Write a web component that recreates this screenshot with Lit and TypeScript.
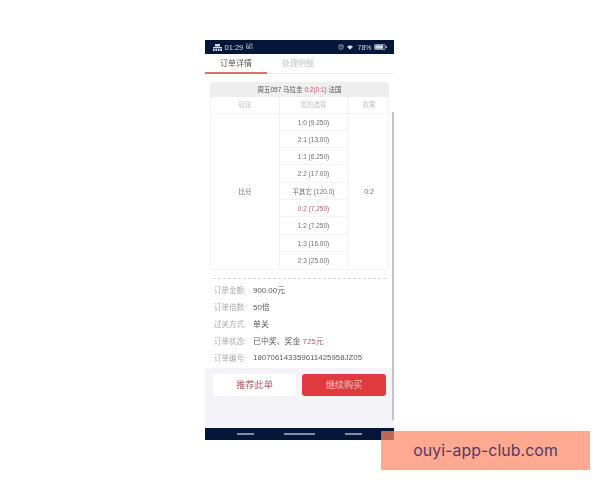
import { LitElement, html, css } from "lit";
import { customElement } from "lit/decorators.js";

const picks = ["1:0 (9.250)", "2:1 (13.00)", "1:1 (6.250)", "2:2 (17.00)", "平其它 (120.0)", "0:2 (7.250)", "1:2 (7.250)", "1:3 (16.00)", "2:3 (25.00)"];

@customElement("app-root")
export class AppRoot extends LitElement {
  static styles = css`
    :host { display: block; width: 600px; height: 480px; position: relative; overflow: hidden; background: #fff;
      font-family: "Liberation Sans", "Noto Sans CJK SC", sans-serif; }
    .stage { padding: 40px 0 0 205px; }
    .phone { width: 189px; height: 400px; display: flex; flex-direction: column; background: #fff; position: relative; filter: blur(0.4px); }
    .status { height: 14px; background: #04173a; color: #d5dbe5; display: flex; align-items: center; padding: 0 7px 0 8px; font-size: 7px; gap: 2.5px; flex: none; }
    .status .time { font-size: 7.5px; }
    .speed { font-size: 3.5px; line-height: 3.5px; width: 9px; text-align: left; }
    .spacer { flex: 1; }
    .status svg { display: block; flex: none; }
    .status svg.wifi { margin: 0 1.5px 0 0.5px; }
    .tabs { height: 20px; display: flex; flex: none; font-size: 8px; }
    .tab { width: 62px; box-sizing: border-box; height: 20px; border-bottom: 1px solid #eeeeee; text-align: center; line-height: 20px; color: #c2c2c2; }
    .tab.on { color: #555; border-bottom: 2px solid #dc7075; }
    .tabfill { flex: 1; border-bottom: 1px solid #eeeeee; }
    .content { flex: 1; padding: 8px 5px 0; min-height: 0; }
    .title { height: 15px; background: #eeeeef; border-radius: 2px 2px 0 0; text-align: center; font-size: 6.5px; line-height: 15px; color: #555; }
    .red { color: #bd5c6c; }
    .grid { display: grid; grid-template-columns: 69px 68px 42px; border: 1px solid #f3f3f3; border-top: 0; box-sizing: border-box; font-size: 6.5px; color: #707070; }
    .head { height: 16.5px; line-height: 16px; text-align: center; color: #c0c0c0; border-bottom: 1px solid #f3f3f3; border-right: 1px solid #f3f3f3; box-sizing: border-box; }
    .head:nth-child(3) { border-right: 0; }
    .cell { display: flex; align-items: center; justify-content: center; }
    .result { font-size: 7px; }
    .play { border-right: 1px solid #f3f3f3; }
    .picks { border-right: 1px solid #f3f3f3; display: flex; flex-direction: column; }
    .pick { height: 17.3px; line-height: 17px; text-align: center; border-bottom: 1px solid #f3f3f3; box-sizing: border-box; }
    .pick:last-child { border-bottom: 0; }
    .dash { margin: 8px 3px 2px; border-top: 1px dashed #d8d8d8; }
    .info { padding: 0 4px; display: flex; flex-direction: column; font-size: 7.9px; color: #5c5c5c; }
    .row { height: 17px; display: flex; align-items: center; }
    .label { width: 39px; color: #ababab; flex: none; font-size: 7.5px; }
    .footer { height: 60px; flex: none; background: #f4f4f8; display: flex; gap: 6px; padding: 6px 8px 0; box-sizing: border-box; }
    .btn { height: 22px; width: 84px; border-radius: 3px; text-align: center; line-height: 22px; font-size: 9.2px; }
    .btn.white { width: 83px; background: #fff; color: #b5606a; }
    .btn.solid { background: #e0393e; color: #f2c4c4; }
    .nav { height: 12px; flex: none; background: #04173a; display: flex; align-items: center; gap: 30px; padding-left: 32px; }
    .nav i { display: block; width: 17px; height: 1.2px; background: #7f8fa6; }
    .nav i.long { width: 31px; }
    .scroll { position: absolute; left: 187px; top: 72px; width: 2px; height: 308px; background: #c4c4c4; }
    .mark { position: absolute; left: 381px; top: 431px; width: 209px; height: 39px; background: rgba(255, 136, 102, 0.72); color: #54386a;
      font-family: Inter, "Liberation Sans", sans-serif; font-size: 15.8px; display: flex; align-items: center; justify-content: center; letter-spacing: 0.1px; }
  `;

  render() {
    return html`
      <div class="stage">
        <div class="phone">
          <div class="status">
            <svg width="9" height="7" viewBox="0 0 9 7"><path d="M0 3h9v1H0zM0 4.5h1.6V7H0zM2.4 4.5H4V7H2.4zM4.8 4.5h1.6V7H4.8zM7.2 4.5H9V7H7.2zM2 0h5v2.4H2z" fill="#d5dbe5"/></svg>
            <span class="time">01:29</span>
            <span class="speed">0.00<br />KB/s</span>
            <span class="spacer"></span>
            <svg width="6" height="6" viewBox="0 0 7 7"><circle cx="3.5" cy="3.7" r="2.6" fill="none" stroke="#d5dbe5" stroke-width=".8"/><path d="M3.5 2.4v1.4l1 .6M.6 1.4L1.8.4M6.4 1.4L5.2.4" fill="none" stroke="#d5dbe5" stroke-width=".6"/></svg>
            <svg class="wifi" width="6" height="5" viewBox="0 0 8 6"><path d="M0 2a5.6 5.6 0 0 1 8 0L4 6z" fill="#d5dbe5"/></svg>
            <span>78%</span>
            <svg width="13" height="6" viewBox="0 0 13 6"><rect x=".4" y=".4" width="10.8" height="5.2" rx="1" fill="none" stroke="#d5dbe5" stroke-width=".7"/><rect x="1.2" y="1.2" width="8" height="3.6" fill="#d5dbe5"/><rect x="11.7" y="2" width="1" height="2" fill="#d5dbe5"/></svg>
          </div>
          <div class="tabs">
            <div class="tab on">订单详情</div>
            <div class="tab">处理明细</div>
            <div class="tabfill"></div>
          </div>
          <div class="content">
            <div class="title">周五057 马拉圭 <span class="red">0:2(0:1)</span> 法国</div>
            <div class="grid">
              <div class="head">玩法</div>
              <div class="head">您的选择</div>
              <div class="head">赛果</div>
              <div class="cell play">比分</div>
              <div class="picks">
                ${picks.map((p) => html`<div class="pick ${p.startsWith("0:2") ? "red" : ""}">${p}</div>`)}
              </div>
              <div class="cell result">0:2</div>
            </div>
            <div class="dash"></div>
            <div class="info">
              <div class="row"><span class="label">订单金额:</span><span>900.00元</span></div>
              <div class="row"><span class="label">订单倍数:</span><span>50倍</span></div>
              <div class="row"><span class="label">过关方式:</span><span>单关</span></div>
              <div class="row"><span class="label">订单状态:</span><span>已中奖、奖金 <span class="red">725元</span></span></div>
              <div class="row"><span class="label">订单编号:</span><span>180706143359611425958JZ05</span></div>
            </div>
          </div>
          <div class="footer">
            <div class="btn white">推荐此单</div>
            <div class="btn solid">继续购买</div>
          </div>
          <div class="nav"><i></i><i class="long"></i><i></i></div>
          <div class="scroll"></div>
        </div>
      </div>
      <div class="mark">ouyi-app-club.com</div>
    `;
  }
}
